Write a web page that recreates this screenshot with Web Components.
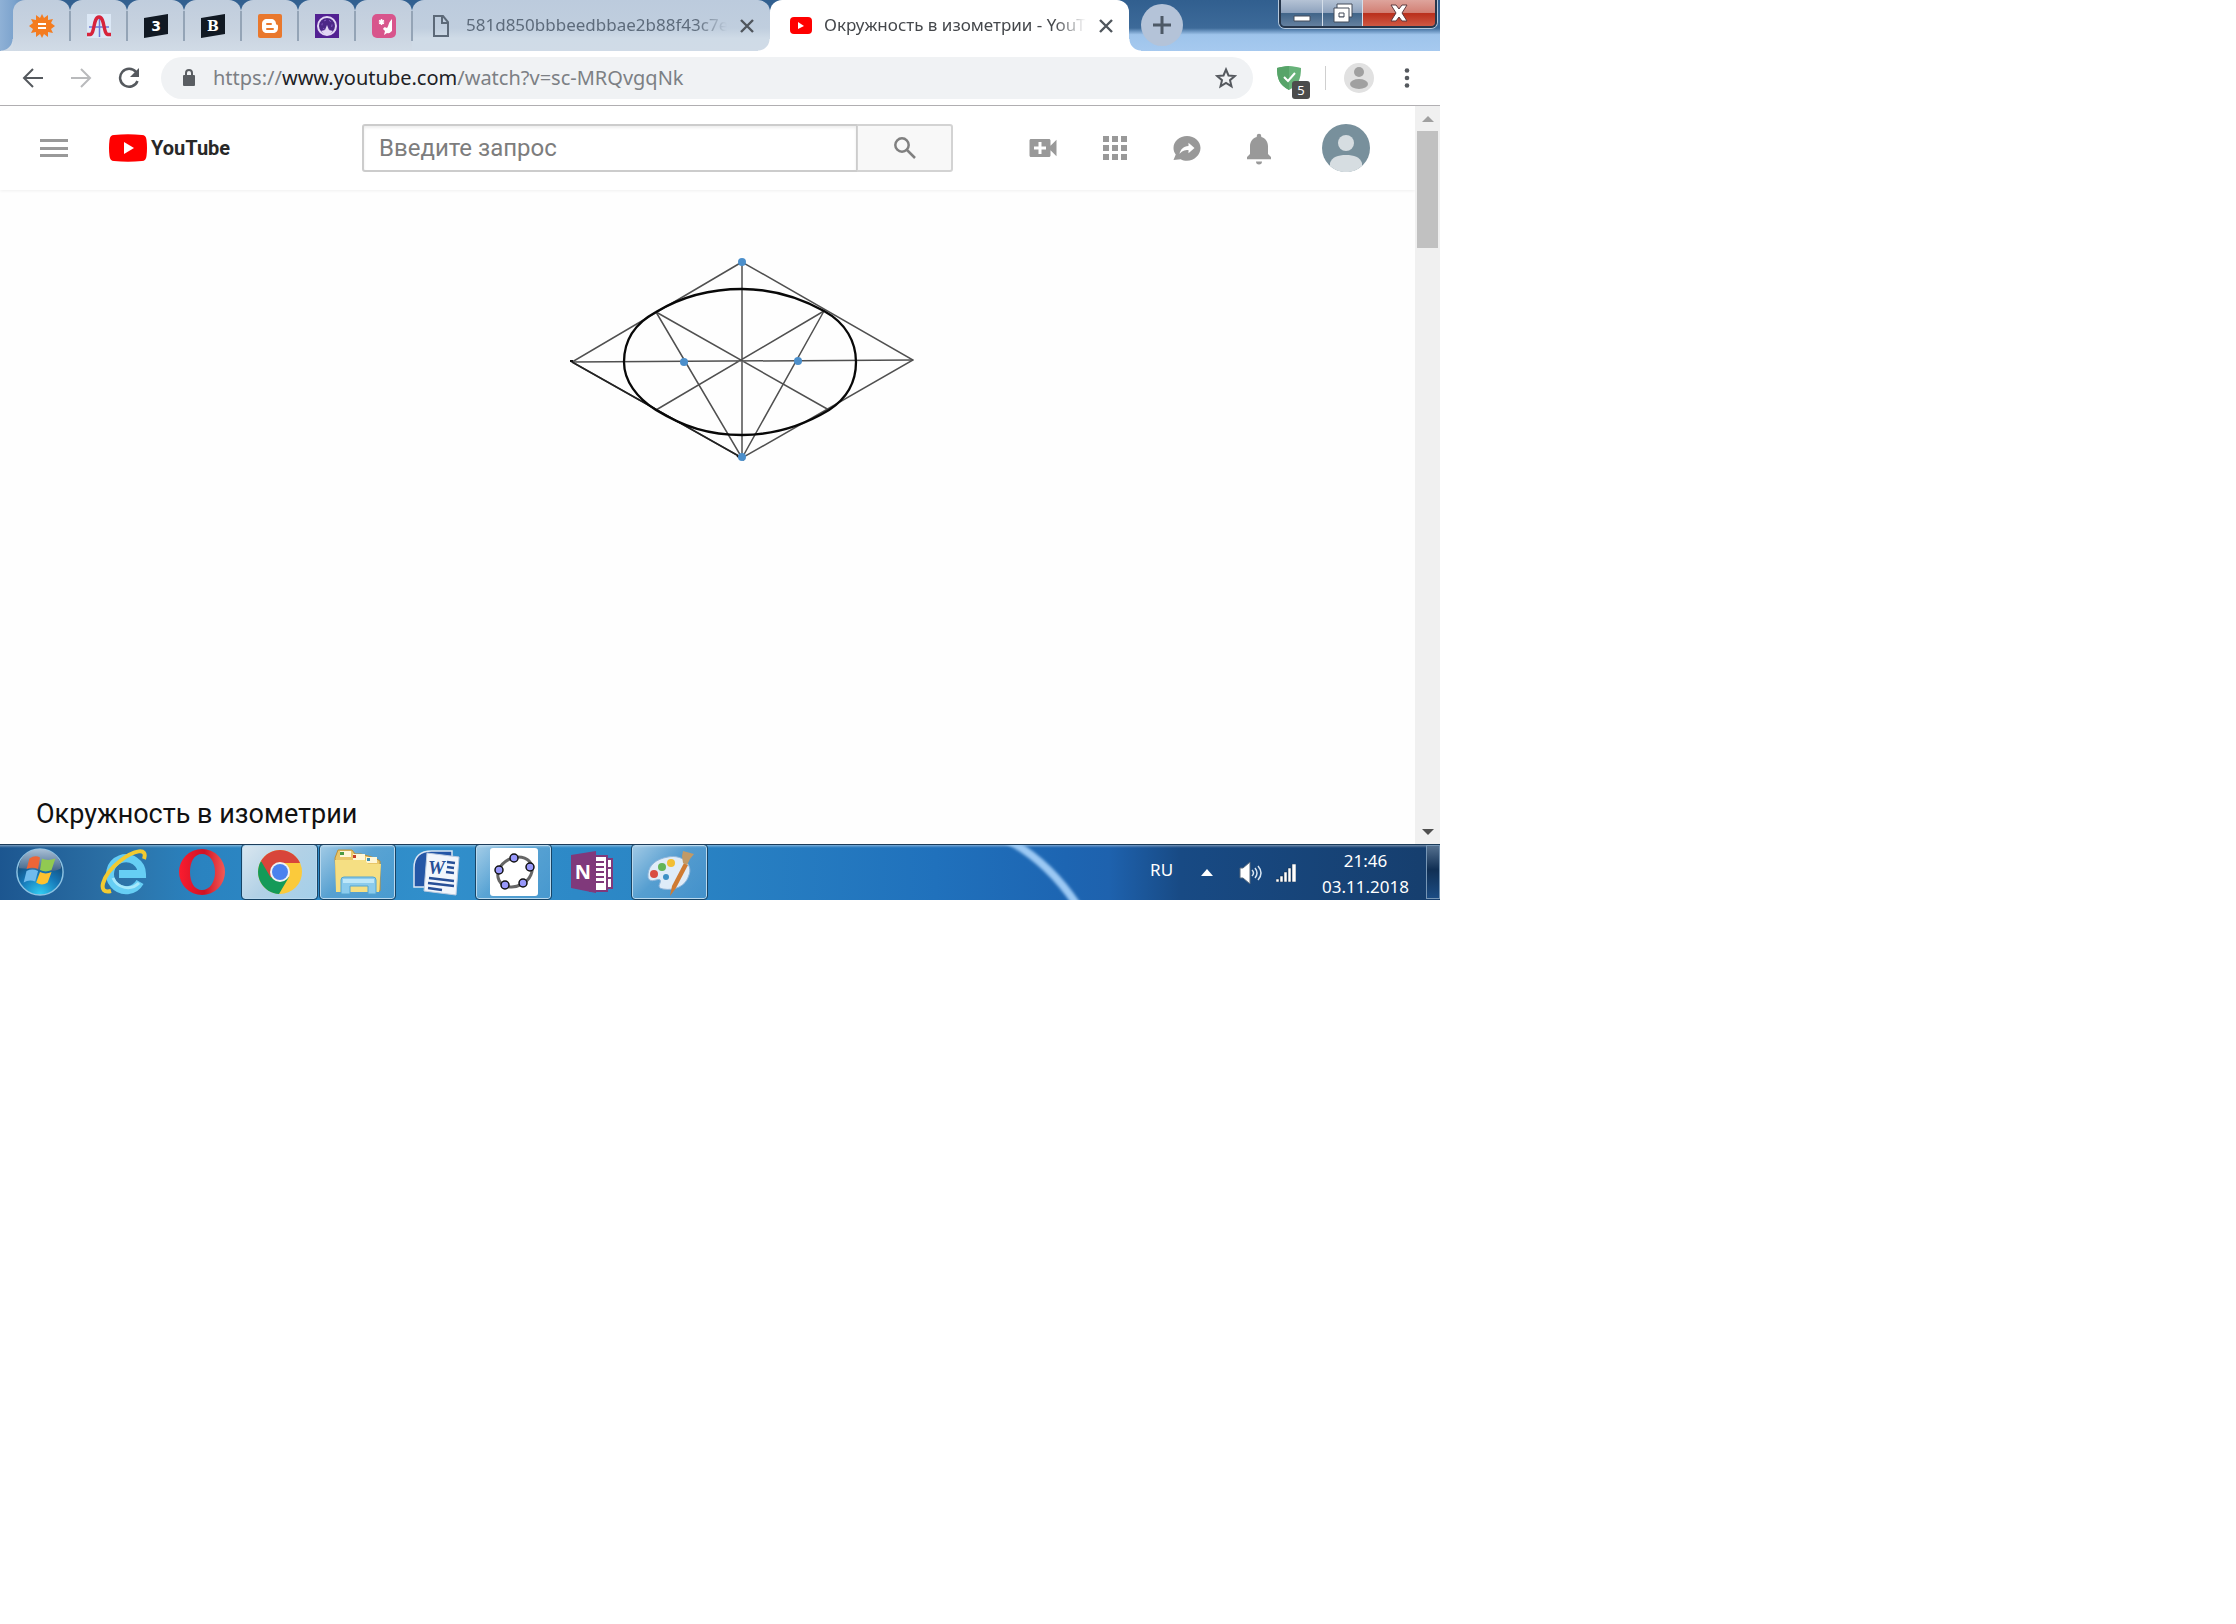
<!DOCTYPE html>
<html lang="ru">
<head>
<meta charset="utf-8">
<title>Окружность в изометрии - YouTube</title>
<style>
  body {
    margin: 0;
    background: #fff;
    font-family: "Noto Sans", "Open Sans", sans-serif;
  }
</style>
</head>
<body>
<desktop-screen></desktop-screen>

<script>
(function () {
  const RESET = `
    *{ box-sizing:border-box; }
    button{ margin:0; padding:0; border:0; background:none; font:inherit; color:inherit; display:grid; place-items:center; }
    a{ color:inherit; text-decoration:none; }
    svg{ display:block; }
  `;

  function define(name, markup) {
    customElements.define(name, class extends HTMLElement {
      constructor() {
        super();
        this.attachShadow({ mode: "open" });
        this.shadowRoot.innerHTML = `<style>${RESET}</style>` + markup;
      }
    });
  }

  /* =========================
     BROWSER TAB
  ========================= */
  define("browser-tab", `
    <style>
      :host{
        position:relative;
        display:flex;
        align-items:center;
        flex:0 0 358px;
        min-width:0;
        height:51px;
        padding:0 15px 0 20px;
        border-radius:12px 12px 0 0;
        background:linear-gradient(#bccbdd, #c0cede 55%, #cfdbe7 75%, #d0dbe7);
        color:#5d6b7b;
      }
      :host([pinned]){
        flex-basis:57px;
        padding:0;
        justify-content:center;
        background:linear-gradient(#c0cddd, #c8d3e0 60%, #d1dbe6);
      }
      :host([active]){
        flex-basis:359px;
        background:#fff;
        color:#45484c;
      }
      /* feet of the tab, curving out over the strip */
      :host([active])::before, :host([active])::after, :host(:first-child)::before{
        content:"";
        position:absolute;
        bottom:0;
        width:12px;
        height:12px;
      }
      :host([active])::before{ left:-12px; background:radial-gradient(circle at 0 0, transparent 11px, #fff 12px); }
      :host([active])::after{ right:-12px; background:radial-gradient(circle at 100% 0, transparent 11px, #fff 12px); }
      :host(:first-child)::before{ left:-12px; background:radial-gradient(circle at 0 0, transparent 11px, #d1dbe6 12px); }
      .label{
        flex:1;
        min-width:0;
        margin:0 12px;
        padding-bottom:2px;
        overflow:hidden;
        white-space:nowrap;
        font-size:17px;
        line-height:24px;
        -webkit-mask-image:linear-gradient(90deg, #000 88%, transparent);
        mask-image:linear-gradient(90deg, #000 88%, transparent);
      }
      .rule{ display:none; width:2px; height:30px; background:#94a4b6; }
      :host([pinned]) .label, :host([pinned]) button{ display:none; }
      :host([pinned]) .rule{ display:block; position:absolute; right:-1px; top:11px; z-index:1; }
    </style>
    <slot name="icon"></slot>
    <span class="label"><slot></slot></span>
    <button aria-label="Закрыть">
      <svg width="16" height="16" viewBox="0 0 16 16" stroke="#50565d" stroke-width="2.400"><path d="M2 2l12 12M14 2L2 14"/></svg>
    </button>
    <span class="rule"></span>
  `);

  /* =========================
     WINDOW BUTTONS
  ========================= */
  define("window-buttons", `
    <style>
      :host{
        display:flex;
        height:28px;
        border:2px solid #26364b;
        border-top:0;
        border-radius:0 0 6px 6px;
        box-shadow:0 0 0 1px #b5c8dc;
        overflow:hidden;
      }
      button{
        width:42px;
        height:26px;
        background:linear-gradient(#b5c3d5, #8fa3be 48%, #416589 52%, #64809f);
        border-right:1px solid #d5dfea;
      }
      .restore{ width:40px; }
      .close{
        width:72px;
        background:linear-gradient(#dea49c, #d28075 48%, #ba2f1c 52%, #cf5843);
        border:0;
      }
    </style>
    <button aria-label="Свернуть">
      <svg width="20" height="20" viewBox="0 0 20 20"><path d="M2 13h16v5H2z" fill="#fff" stroke="#444d5a"/></svg>
    </button>
    <button class="restore" aria-label="Свернуть в окно">
      <svg width="22" height="20" viewBox="0 0 22 20" fill="#fff" stroke="#444d5a" fill-rule="evenodd">
        <path d="M5 1h15v13H5z"/><path d="M2 5h15v14H2zM7 10v4h5v-4z"/>
      </svg>
    </button>
    <button class="close" aria-label="Закрыть окно">
      <svg width="20" height="18" viewBox="0 0 20 18"><path d="M2 1h5l3 4 3-4h5l-5 8 5 8h-5l-3-4-3 4H2l5-8z" fill="#fff" stroke="#5c3a3f"/></svg>
    </button>
  `);

  /* =========================
     TAB STRIP
  ========================= */
  define("tab-strip", `
    <style>
      :host{
        display:flex;
        height:51px;
        padding-left:13px;
        background:
          linear-gradient(90deg, #8fb1d6 0, #7ca3cd 14px, transparent 50px),
          linear-gradient(#315f8f 0, #3d6a99 55%, #9ec4eb 68%, #a6c9ef);
      }
      .tabs{ display:flex; flex:0 1 auto; }
      .new{
        flex:none;
        width:42px;
        height:42px;
        margin:4px 0 0 12px;
        border-radius:50%;
        background:#b4c3d8;
      }
      window-buttons{ margin:0 3px 0 auto; }
    </style>
    <div class="tabs">
      <browser-tab pinned>
        <svg slot="icon" width="26" height="26" viewBox="0 0 26 26">
          <path fill="#f47c20" d="M13 1l2 4 4-3v5l5-1-2 4 4 3-4 3 2 4-5-1v5l-4-3-2 4-2-4-4 3v-5l-5 1 2-4-4-3 4-3-2-4 5 1V2l4 3z"/>
          <path stroke="#fff" stroke-width="2" d="M9 11h8M9 15h8"/>
        </svg>
      </browser-tab>
      <browser-tab pinned>
        <svg slot="icon" width="24" height="24" viewBox="0 0 24 24" fill="none">
          <path fill="#dce8f6" d="M0 0h24v24H0z"/>
          <path stroke="#6978d8" stroke-width="1.500" d="M2 13h20M12.500 3v20"/>
          <path stroke="#d7233b" stroke-width="3.400" d="M0 20.500h3C8 20 6 3 12 3s4 17 9 17.500h3"/>
        </svg>
      </browser-tab>
      <browser-tab pinned>
        <svg slot="icon" width="24" height="24" viewBox="0 0 24 24">
          <path fill="#111923" d="M0 4l24-4v20L0 24z"/>
          <text x="12" y="17" text-anchor="middle" font-family="DejaVu Sans" font-weight="700" font-size="14" fill="#fff">3</text>
        </svg>
      </browser-tab>
      <browser-tab pinned>
        <svg slot="icon" width="24" height="24" viewBox="0 0 24 24">
          <path fill="#111923" d="M0 4l24-4v20L0 24z"/>
          <text x="12" y="17" text-anchor="middle" font-family="DejaVu Serif" font-weight="700" font-size="14" fill="#fff">B</text>
        </svg>
      </browser-tab>
      <browser-tab pinned>
        <svg slot="icon" width="24" height="24" viewBox="0 0 24 24">
          <rect width="24" height="24" rx="2" fill="#e9782d"/>
          <path fill="#fff" d="M9 5h4c3 0 5 2 5 5 0 1 2 0 2 2v2c0 3-2 5-5 5H9c-3 0-5-2-5-5v-4c0-3 2-5 5-5z"/>
          <path stroke="#e9782d" stroke-width="2" stroke-linecap="round" d="M9 10h4M9 15h6"/>
        </svg>
      </browser-tab>
      <browser-tab pinned>
        <svg slot="icon" width="24" height="24" viewBox="0 0 24 24">
          <path fill="#522192" d="M0 0h24v24H0z"/>
          <circle cx="12" cy="12" r="9" fill="#4c2787" stroke="#e2d6f4" stroke-width="2"/>
          <circle cx="12" cy="11" r="5" fill="none" stroke="#8b5fc7" stroke-dasharray="2 3"/>
          <path fill="#e2d6f4" d="M12 11l2 5 4 1-3 3H9l-3-3 4-1z"/>
        </svg>
      </browser-tab>
      <browser-tab pinned>
        <svg slot="icon" width="24" height="24" viewBox="0 0 24 24">
          <rect width="24" height="24" rx="5" fill="#d8558c"/>
          <path stroke="#fff" stroke-width="1.500" d="M9.500 5v6M7 6.500l5 3M12 6.500l-5 3"/>
          <path fill="#fff" d="M20 5v12c-2 1-2 3-5 2l-3 2 1-4-2-2c1-2 2-2 4-1 2-3 1-5 5-9z"/>
        </svg>
      </browser-tab>
      <browser-tab>
        <svg slot="icon" width="22" height="24" viewBox="0 0 22 24" fill="none" stroke="#5c6978" stroke-width="2"><path d="M2 2h9l5 6v14H2zM10 2v7h6"/></svg>
        581d850bbbeedbbae2b88f43c7e5
      </browser-tab>
      <browser-tab active>
        <svg slot="icon" width="22" height="17" viewBox="0 0 22 17"><rect width="22" height="17" rx="4" fill="#f00"/><path d="M8 5l6 4-6 3z" fill="#fff"/></svg>
        Окружность в изометрии - YouTube
      </browser-tab>
    </div>
    <button class="new" aria-label="Новая вкладка">
      <svg width="18" height="18" viewBox="0 0 18 18" stroke="#4d5966" stroke-width="3"><path d="M0 9h18M9 0v18"/></svg>
    </button>
    <window-buttons></window-buttons>
  `);

  /* =========================
     ADDRESS BAR
  ========================= */
  define("address-bar", `
    <style>
      :host{
        display:flex;
        align-items:center;
        height:55px;
        padding:0 15px;
        background:#fff;
        border-bottom:1px solid #b2b0b3;
      }
      .nav{ display:flex; gap:12px; margin-right:14px; }
      .nav button{ width:36px; height:36px; }
      .field{
        flex:1;
        display:flex;
        align-items:center;
        height:42px;
        padding:0 16px 0 20px;
        border-radius:21px;
        background:#f0f2f4;
        font-size:20px;
        line-height:28px;
        color:#7c8084;
      }
      .url{ flex:1; margin-left:16px; white-space:nowrap; }
      b{ font-weight:400; color:#202124; }
      .shield{ position:relative; margin-left:24px; }
      .badge{
        position:absolute;
        left:15px;
        top:15px;
        width:18px;
        height:18px;
        border-radius:3px;
        background:#4c4c4c;
        color:#fff;
        font-size:13px;
        line-height:18px;
        text-align:center;
      }
      .rule{ width:1px; height:24px; margin:0 18px 0 24px; background:#cfcfcf; }
      .menu{ width:36px; height:36px; margin-left:15px; }
    </style>
    <div class="nav">
      <button aria-label="Назад"><svg width="22" height="20" viewBox="0 0 22 20" fill="none" stroke="#55595e" stroke-width="2"><path d="M21 10H2M11 1l-9 9 9 9"/></svg></button>
      <button aria-label="Вперёд"><svg width="22" height="20" viewBox="0 0 22 20" fill="none" stroke="#b9babc" stroke-width="2"><path d="M1 10h19M11 1l9 9-9 9"/></svg></button>
      <button aria-label="Обновить"><svg width="22" height="22" viewBox="0 0 22 22"><path d="M18 5a9 9 0 1 0 1.500 9" fill="none" stroke="#55595e" stroke-width="2.500"/><path d="M21 1v9h-9z" fill="#55595e"/></svg></button>
    </div>
    <div class="field">
      <svg width="16" height="18" viewBox="0 0 16 18"><rect x="2" y="6" width="12" height="11" rx="1" fill="#5a5e62"/><path d="M5 7V4a3 3 0 0 1 6 0v3" fill="none" stroke="#5a5e62" stroke-width="2"/></svg>
      <span class="url">https://<b>www.youtube.com</b>/watch?v=sc-MRQvgqNk</span>
      <button aria-label="Добавить в закладки"><svg width="22" height="22" viewBox="0 0 22 22" fill="none" stroke="#55595e" stroke-width="2"><path d="M11 2.500l2.500 6 6.300.5-4.800 4.200 1.500 6.200-5.500-3.400-5.500 3.400L7 13.200 2.200 9l6.300-.5z"/></svg></button>
    </div>
    <button class="shield" aria-label="Защита">
      <svg width="24" height="24" viewBox="0 0 24 24"><path d="M12 0c4 0 8 1 12 2 0 10-2 17-12 22C2 19 0 12 0 2c4-1 8-2 12-2z" fill="#67b279"/><path d="M12 0v24C2 19 0 12 0 2c4-1 8-2 12-2z" fill="#57a469"/><path d="M7 11l4 4 7-8" fill="none" stroke="#fff" stroke-width="2"/></svg>
      <span class="badge">5</span>
    </button>
    <span class="rule"></span>
    <button aria-label="Профиль">
      <svg width="30" height="30" viewBox="0 0 30 30"><circle cx="15" cy="15" r="15" fill="#e1e1e1"/><circle cx="15" cy="9" r="5" fill="#a0a0a0"/><ellipse cx="15" cy="21" rx="9" ry="5" fill="#a0a0a0"/></svg>
    </button>
    <button class="menu" aria-label="Меню">
      <svg width="6" height="20" viewBox="0 0 6 20" fill="#55595e"><circle cx="3" cy="2.500" r="2.300"/><circle cx="3" cy="10" r="2.300"/><circle cx="3" cy="17.500" r="2.300"/></svg>
    </button>
  `);

  /* =========================
     SITE HEADER
  ========================= */
  define("site-header", `
    <style>
      :host{
        display:flex;
        align-items:center;
        height:84px;
        padding:0 45px 0 36px;
        background:#fff;
        box-shadow:0 1px 3px rgba(0,0,0,.06);
      }
      .guide{ width:36px; height:36px; }
      .logo{
        display:flex;
        align-items:center;
        gap:4px;
        margin-left:37px;
        font-family:Roboto, sans-serif;
        font-size:20px;
        line-height:28px;
        font-weight:700;
        color:#282828;
      }
      form{
        display:flex;
        flex:0 1 591px;
        margin-left:auto;
      }
      input{
        flex:1;
        min-width:0;
        height:48px;
        padding:0 15px;
        border:2px solid #ccc;
        border-right-width:1px;
        border-radius:3px 0 0 3px;
        font:24px/32px Roboto, sans-serif;
        background:#fff;
        box-shadow:inset 0 2px 3px #eee;
      }
      input::placeholder{ color:#7d7d7d; opacity:1; }
      form button{
        width:96px;
        height:48px;
        border:2px solid #d3d3d3;
        border-left-width:1px;
        border-radius:0 3px 3px 0;
        background:#f8f8f8;
      }
      .tools{ display:flex; align-items:center; gap:36px; margin-left:72px; }
      .tools button{ width:36px; height:36px; }
      .tools .me{ width:48px; height:48px; margin-left:9px; }
    </style>
    <button class="guide" aria-label="Меню сайта">
      <svg width="28" height="18" viewBox="0 0 28 18" fill="#999"><path d="M0 0h28v3H0zM0 8h28v3H0zM0 15h28v3H0z"/></svg>
    </button>
    <a class="logo" href="#">
      <svg width="38" height="28" viewBox="0 0 38 28"><path d="M5 1Q19-.5 33 1q4 0 4.500 5 1 8 0 16-.5 5-4.500 5-14 1.500-28 0-4 0-4.500-5-1-8 0-16Q1 1 5 1z" fill="#f00"/><path d="M15 8l10 6-10 6z" fill="#fff"/></svg>
      YouTube
    </a>
    <form>
      <input type="text" placeholder="Введите запрос" aria-label="Введите запрос">
      <button type="button" aria-label="Найти">
        <svg width="22" height="22" viewBox="0 0 22 22" fill="none" stroke="#808080" stroke-width="2.500"><circle cx="8" cy="8" r="6.700"/><path d="M13 13l8 8"/></svg>
      </button>
    </form>
    <div class="tools">
      <button aria-label="Создать">
        <svg width="36" height="36" viewBox="0 0 24 24" fill="#999"><path d="M17 10.500V7c0-.55-.45-1-1-1H4c-.55 0-1 .45-1 1v10c0 .55.450 1 1 1h12c.55 0 1-.45 1-1v-3.500l4 4v-11l-4 4zM14 13h-3v3H9v-3H6v-2h3V8h2v3h3v2z"/></svg>
      </button>
      <button aria-label="Приложения">
        <svg width="36" height="36" viewBox="0 0 24 24" fill="#999"><path d="M4 4h4v4H4zM10 4h4v4h-4zM16 4h4v4h-4zM4 10h4v4H4zM10 10h4v4h-4zM16 10h4v4h-4zM4 16h4v4H4zM10 16h4v4h-4zM16 16h4v4h-4z"/></svg>
      </button>
      <button aria-label="Сообщения">
        <svg width="36" height="36" viewBox="0 0 24 24"><path fill="#999" d="M12 4c5 0 9 3.600 9 8s-4 8.500-9 8.500c-1.500 0-3-.3-4.200-1L3 20l1.500-3.600C3.500 15 3 13.700 3 12c0-4.400 4-8 9-8z"/><path fill="#fff" d="M13 8.500l4 3.500-4 3.500v-2.200c-3 0-4.500.7-6 2.700.6-3 2.500-5 6-5.300z"/></svg>
      </button>
      <button aria-label="Уведомления">
        <svg width="36" height="36" viewBox="0 0 24 24" fill="#999"><path d="M10 20a2 2 0 0 0 4 0h-4zm10-3v1.500H4V17l2-2v-5c0-3.070 1.630-5.640 4.500-6.320V3a1.500 1.500 0 0 1 3 0v.68C16.370 4.360 18 6.920 18 10v5z" transform="translate(0 1)"/></svg>
      </button>
      <button class="me" aria-label="Аккаунт">
        <svg width="48" height="48" viewBox="0 0 48 48"><circle cx="24" cy="24" r="24" fill="#78909c"/><circle cx="24" cy="19" r="8" fill="#d6dde1"/><path d="M8 42v-3c2-6 8-8 16-8s14 2 16 8v3a24 24 0 0 1-32 0z" fill="#d6dde1"/></svg>
      </button>
    </div>
  `);

  /* =========================
     ISOMETRIC CIRCLE
  ========================= */
  define("isometric-circle", `
    <style>
      :host{ display:block; width:344px; }
    </style>
    <svg width="344" height="204" viewBox="570 257 344 204" fill="none" stroke="#505050" stroke-width="1.500">
      <path d="M742 262L572 362 742 458 913 360z"/>
      <path d="M742 262V458M572 362L913 360M656 312L829 410M824 311L656 410"/>
      <path d="M656 312L742 458 824 311"/>
      <path d="M572 362L744 459" stroke="#222"/>
      <path stroke="#080808" stroke-width="2.300" d="M656 312C632 325 624 343 624 362 624 381 637 398 656 410C684 427 709 435 742 435 775 435 804 425 829 410 849 397 856 381 856 362 856 342 846 323 824 311C795 295 770 289 742 289 709 289 681 297 656 312z"/>
      <path d="M570 361h3" stroke="#111" stroke-width="2"/>
      <path d="M737 456l7 4" stroke="#111" stroke-width="2"/>
      <g fill="#4c8fcb" stroke="none"><circle cx="742" cy="262" r="4"/><circle cx="742" cy="457" r="4"/><circle cx="684" cy="362" r="4"/><circle cx="798" cy="361" r="4"/></g>
    </svg>
  `);

  /* =========================
     SCROLL BAR
  ========================= */
  define("scroll-bar", `
    <style>
      :host{
        display:flex;
        flex-direction:column;
        align-items:center;
        width:25px;
        background:#f0f0f0;
      }
      .arrow{ width:25px; height:25px; }
      .thumb{ width:21px; height:117px; background:#c1c1c1; }
      .down{ margin-top:auto; }
    </style>
    <button class="arrow" aria-label="Вверх"><svg width="12" height="6" viewBox="0 0 12 6"><path d="M0 6l6-6 6 6z" fill="#a0a0a0"/></svg></button>
    <div class="thumb"></div>
    <button class="arrow down" aria-label="Вниз"><svg width="12" height="6" viewBox="0 0 12 6"><path d="M0 0h12L6 6z" fill="#505050"/></svg></button>
  `);

  /* =========================
     WATCH PAGE
  ========================= */
  define("watch-page", `
    <style>
      :host{ display:flex; background:#fefefe; }
      .page{ flex:1; min-width:0; }
      .player{
        display:flex;
        justify-content:center;
        padding:67px 0 323px 69px;
      }
      h1{
        margin:0;
        padding:14px 36px;
        font:400 27px/32px Roboto, sans-serif;
        color:#111;
      }
    </style>
    <div class="page">
      <site-header></site-header>
      <div class="player"><isometric-circle></isometric-circle></div>
      <h1>Окружность в изометрии</h1>
    </div>
    <scroll-bar></scroll-bar>
  `);

  /* =========================
     TASKBAR ITEM
  ========================= */
  define("task-item", `
    <style>
      :host{ display:block; width:78px; height:56px; padding:1px 2px 0 1px; }
      button{ width:75px; height:54px; border-radius:3px; }
      :host([open]) button{
        border:1px solid #b9d9ee;
        outline:1px solid #174466;
        background:linear-gradient(135deg, rgba(255,255,255,.55), rgba(255,255,255,.2) 45%, rgba(255,255,255,.12));
      }
      :host([current]) button{
        background:linear-gradient(135deg, #d9e6ef, #b2d1e6 50%, #a4cfe9);
      }
    </style>
    <button><slot></slot></button>
  `);

  /* =========================
     TASKBAR
  ========================= */
  define("task-bar", `
    <style>
      :host{
        position:relative;
        display:flex;
        height:56px;
        border-top:1px solid #1c3c5a;
        overflow:hidden;
        color:#fff;
        background:
          linear-gradient(rgba(255,255,255,.4), rgba(255,255,255,.1) 2px, transparent 3px),
          linear-gradient(90deg, #1c5690 0, #2c71a6 8%, #2a83c0 14%, #318fcb 30%, #2b86c5 45%, #2071bc 65%, #1d65b2 74%, #1e62ae 77%, #184a84 82%, #163e6d 100%);
      }
      .wave{ position:absolute; left:1000px; top:0; }
      .start{ width:50px; height:52px; margin:1px 20px 0 15px; }
      .items{ display:flex; margin-top:-1px; }
      .tray{
        position:relative;
        display:flex;
        align-items:center;
        margin-left:auto;
        padding-right:17px;
        font-size:17px;
        line-height:26px;
      }
      .lang{ margin-right:28px; padding-bottom:5px; }
      .volume{ margin:0 13px 0 26px; }
      time{ margin-left:26px; padding-top:2px; text-align:center; }
      .peek{
        position:relative;
        width:14px;
        height:54px;
        border:1px solid #7796b5;
        background:linear-gradient(#54708f, #102f54 45%, #1c4c83);
      }
    </style>
    <svg class="wave" width="90" height="56" viewBox="0 0 90 56"><defs><filter id="soft"><feGaussianBlur stdDeviation="1.500"/></filter></defs><path d="M6-6Q48 16 77 60" fill="none" stroke="#9bc9f4" stroke-width="8" filter="url(#soft)"/></svg>
    <button class="start" aria-label="Пуск">
      <svg width="50" height="50" viewBox="0 0 52 52">
        <defs>
          <radialGradient id="orb" cx=".5" cy="1" r=".9"><stop offset="0" stop-color="#32d0f5"/><stop offset=".5" stop-color="#1678b8"/><stop offset="1" stop-color="#123d68"/></radialGradient>
          <linearGradient id="gloss" x2="0" y2="1"><stop offset="0" stop-color="#a9c0d6"/><stop offset="1" stop-color="#3f648a"/></linearGradient>
        </defs>
        <circle cx="26" cy="26" r="24" fill="url(#orb)" stroke="#8dc3e3" stroke-width="1.500"/>
        <path d="M4 22a22 20 0 0 1 44 0q-8 5-22 2-14-2-22-2z" fill="url(#gloss)"/>
        <path d="M15 12q6-4 11-1l-2 12q-6-3-12 0z" fill="#ed6537"/>
        <path d="M28 12q6 3 14 0l-4 12q-6 3-12 0z" fill="#91c951"/>
        <path d="M12 25q6-3 12 0l-3 11q-6-3-12 1z" fill="#70bbed"/>
        <path d="M26 26q6 3 12 0l-4 11q-6 4-12 0z" fill="#fdc22f"/>
      </svg>
    </button>
    <div class="items">
      <task-item>
        <svg width="48" height="48" viewBox="0 0 48 48" fill="none">
          <path d="M40 34A16 16 0 1 1 42 26H19" stroke="#66cef4" stroke-width="8"/>
          <path d="M39 35A16 16 0 0 1 13 30" stroke="#a6e8fb" stroke-width="3"/>
          <path d="M11 43C-3 47 1 28 20 13 34 2 48-1 44 11" stroke="#f2ca31" stroke-width="4"/>
        </svg>
      </task-item>
      <task-item>
        <svg width="48" height="48" viewBox="0 0 48 48">
          <defs><linearGradient id="op"><stop offset="0" stop-color="#fb1c2f"/><stop offset=".55" stop-color="#cf1325"/><stop offset="1" stop-color="#f35a56"/></linearGradient></defs>
          <path d="M24 1a23 23 0 1 0 0 46 23 23 0 1 0 0-46zm0 5c8 0 13 8 13 18s-5 18-13 18-12-8-12-18S16 6 24 6z" fill="url(#op)" fill-rule="evenodd"/>
        </svg>
      </task-item>
      <task-item open current>
        <svg width="44" height="44" viewBox="0 0 44 44">
          <circle cx="22" cy="22" r="22" fill="#fbca3b"/>
          <path d="M3 11a22 22 0 0 0 18 33l10-17-9 4z" fill="#149a58"/>
          <path d="M3 11l10 17 9-15h20l-1-2A22 22 0 0 0 3 11z" fill="#d8453a"/>
          <circle cx="22" cy="22" r="10" fill="#f2f2f2"/><circle cx="22" cy="22" r="8" fill="#4a82ee"/>
        </svg>
      </task-item>
      <task-item open>
        <svg width="48" height="48" viewBox="0 0 48 48">
          <path d="M1 10l3-8h14l3 4h6l14 4 5 3v30H3z" fill="#e9c769" stroke="#bd9037"/>
          <path d="M6 3h11v6H6zM19 6h12v6H19zM32 9h11v6H32z" fill="#fff7d6"/>
          <path d="M6 4h4v3H6z" fill="#4b9b42"/><path d="M19 7h3v3h-3z" fill="#c63e28"/><path d="M33 10h3v3h-3z" fill="#3b90b2"/>
          <path d="M1 12h30l3 4h13l-2 28H2z" fill="#f5df83"/>
          <path d="M7 32q0-3 3-3h29q3 0 3 3v14h-8v-8H16v8H7z" fill="#8bcbed" stroke="#53a4d0"/>
          <path d="M9 31h31v4H9z" fill="#bde7f9"/>
        </svg>
      </task-item>
      <task-item>
        <svg width="48" height="48" viewBox="0 0 48 48">
          <path d="M2 39V20Q2 3 20 3h20v36z" fill="#2456a6" stroke="#d9e6f4" stroke-width="1.500"/>
          <path d="M15 5l32 4-3 38-32-4z" fill="#f2f6fc" stroke="#bccbe0"/>
          <path d="M35 14l8 1M35 19l7 1M34 24l8 1M17 30l25 3M16 35l26 3M16 40l14 2" stroke="#274f97" stroke-width="2.500"/>
          <text x="16" y="26" font-family="Liberation Serif" font-style="italic" font-weight="700" font-size="19" fill="#274f97">W</text>
        </svg>
      </task-item>
      <task-item open>
        <svg width="48" height="48" viewBox="0 0 48 48">
          <rect width="48" height="48" rx="3" fill="#fff"/>
          <ellipse cx="25" cy="24" rx="18" ry="14" fill="none" stroke="#666" stroke-width="3" transform="rotate(-28 25 24)"/>
          <g fill="#9999fb" stroke="#111" stroke-width="1.500"><circle cx="24" cy="10" r="4"/><circle cx="40" cy="19" r="4"/><circle cx="33" cy="35" r="4"/><circle cx="15" cy="37" r="4"/><circle cx="9" cy="22" r="4"/></g>
        </svg>
      </task-item>
      <task-item>
        <svg width="44" height="44" viewBox="0 0 44 44">
          <path d="M20 6h17v3h5v29h-5v3H20z" fill="#fff" stroke="#80397b" stroke-width="2"/>
          <path d="M25 12h9M25 17h9M25 22h9M25 27h9M25 32h9M37 9v29M38 18h5M38 28h5" stroke="#80397b" stroke-width="2"/>
          <path d="M1 5l25-4v42L1 38z" fill="#80397b"/>
          <text x="13" y="29" text-anchor="middle" font-family="Open Sans" font-weight="700" font-size="20" fill="#fff">N</text>
        </svg>
      </task-item>
      <task-item open>
        <svg width="48" height="48" viewBox="0 0 48 48">
          <path d="M22 9C37 6 47 17 43 27 40 38 29 43 17 41q-6-1-3-6 2-5-4-3-9 3-8-6C3 17 10 11 22 9z" fill="#dfecf8" stroke="#8fb6da"/>
          <circle cx="20" cy="29" r="3" fill="#3e91c5"/>
          <circle cx="8" cy="26" r="4" fill="#d94c42"/><circle cx="16" cy="19" r="4" fill="#62b557"/><circle cx="25" cy="15" r="4" fill="#f2bf35"/>
          <path d="M38 15l4 2-12 23-6 8 2-10z" fill="#cf7b32"/>
          <path d="M37 15l-1-7 1-5 11 3-4 5-3 6z" fill="#c19a67"/>
        </svg>
      </task-item>
    </div>
    <div class="tray">
      <span class="lang">RU</span>
      <svg width="12" height="7" viewBox="0 0 12 7"><path d="M0 7l6-7 6 7z" fill="#fff"/></svg>
      <svg class="volume" width="24" height="24" viewBox="0 0 24 24"><path d="M1 7h3l7-6v22l-7-6H1z" fill="#fff" stroke="#56697d"/><path d="M13 9q3 3 0 6M16 7q4 5 0 10M19 5q6 7 0 14" fill="none" stroke="#d7e4f1" stroke-width="1.500"/></svg>
      <svg width="20" height="18" viewBox="0 0 20 18" fill="#fff" stroke="#10243c" stroke-width=".5"><path d="M0 15h3v3H0zM4 12h3v6H4zM8 8h3v10H8zM12 4h3v14h-3zM16 0h4v18h-4z"/></svg>
      <time>21:46<br>03.11.2018</time>
    </div>
    <button class="peek" aria-label="Свернуть все окна"></button>
  `);

  /* =========================
     DESKTOP
  ========================= */
  define("desktop-screen", `
    <style>
      :host{ display:block; max-width:1440px; }
    </style>
    <tab-strip></tab-strip>
    <address-bar></address-bar>
    <watch-page></watch-page>
    <task-bar></task-bar>
  `);
})();
</script>
</body>
</html>
